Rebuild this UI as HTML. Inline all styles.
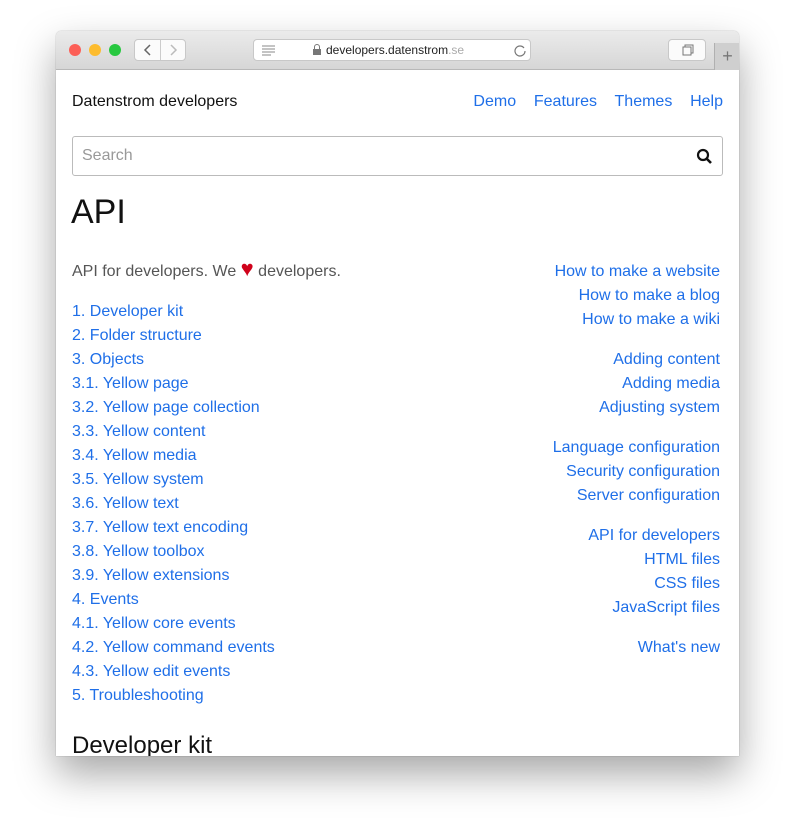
<!DOCTYPE html>
<html><head><meta charset="utf-8"><style>
body{margin:0;width:795px;height:836px;background:#fff;position:relative;overflow:hidden;font-family:"Liberation Sans",sans-serif;}
.win{position:absolute;left:56px;top:31px;width:683px;height:725px;background:#fff;border-radius:5px 5px 0 0;box-shadow:0 18px 40px rgba(0,0,0,.35),0 0 1px rgba(0,0,0,.4);overflow:hidden}
.bar{position:absolute;left:0;top:0;width:683px;height:38px;background:linear-gradient(#ebebeb,#d6d6d6);border-bottom:1px solid #b8b8b8}
.dot{position:absolute;top:13px;width:12px;height:12px;border-radius:50%}
.btn{position:absolute;top:8px;height:22px;background:#fbfbfb;border:1px solid #c8c8c8;border-radius:4px;box-sizing:border-box}
.c{position:absolute;font-size:16px;line-height:24px;color:#0b66e4;white-space:nowrap}
a{color:#1f6fe8;text-decoration:none}
.r{text-align:right;right:19px}
</style></head><body>
<div class="win">
<div class="bar">
<div class="dot" style="left:13px;background:#fc5f57"></div>
<div class="dot" style="left:33px;background:#fdbc2e"></div>
<div class="dot" style="left:53px;background:#28c840"></div>
<div class="btn" style="left:78px;width:52px"><div style="position:absolute;left:25px;top:0;width:1px;height:20px;background:#ccc"></div>
<svg width="50" height="20" style="position:absolute;left:0;top:0"><path d="M15 5l-5 5 5 5" stroke="#666" fill="none" stroke-width="1.5"/><path d="M36 5l5 5-5 5" stroke="#bbb" fill="none" stroke-width="1.5"/></svg></div>
<div class="btn" style="left:197px;width:278px;background:#fff"><svg width="276" height="20" style="position:absolute;left:0;top:0"><path d="M8 6h13M8 9h13M8 12h13M8 15h9" stroke="#888"/><rect x="59" y="9" width="8" height="6" fill="#777"/><path d="M60.5 9v-2a2.5 2.5 0 0 1 5 0v2" stroke="#777" fill="none"/><path d="M270 8a5 5 0 1 0 1 3" stroke="#777" fill="none" stroke-width="1.2"/></svg><span style="position:absolute;left:72px;top:3px;font-size:12px;color:#222">developers.datenstrom<span style="color:#aaa">.se</span></span></div>
<div class="btn" style="left:612px;width:38px"><svg width="36" height="20"><rect x="14" y="7" width="8" height="8" fill="none" stroke="#777"/><path d="M16 7V5h8v8h-2" fill="none" stroke="#777"/></svg></div>
<div style="position:absolute;left:658px;top:12px;width:25px;height:27px;background:#cfcfcf;border-left:1px solid #b0b0b0;color:#777;font-size:18px;text-align:center;line-height:27px">+</div>
</div>
<div style="position:absolute;left:0;top:39px;width:683px;height:686px;">
<div class="c" style="left:16px;top:20px;color:#111">Datenstrom developers</div>
<div class="c" style="right:16px;top:20px"><a>Demo</a>&nbsp;&nbsp;&nbsp; <a>Features</a>&nbsp;&nbsp;&nbsp; <a>Themes</a>&nbsp;&nbsp;&nbsp; <a>Help</a></div>
<div style="position:absolute;left:16px;top:66px;width:651px;height:40px;border:1px solid #bbb;border-radius:3px;box-sizing:border-box"><span style="position:absolute;left:9px;top:10px;font-size:16px;color:#999">Search</span>
<svg width="18" height="18" style="position:absolute;right:8px;top:11px"><circle cx="7" cy="7" r="5" stroke="#111" stroke-width="2.2" fill="none"/><path d="M11 11l4 4" stroke="#111" stroke-width="2.6"/></svg></div>
<div style="position:absolute;left:15px;top:123px;font-size:34px;color:#111">API</div>
<div class="c" style="left:16px;top:190px;color:#555">API for developers. We <span style="color:#d0021b;font-size:22px;line-height:16px">&#x2665;</span> developers.</div>
<div class="c" style="left:16px;top:230px">
<a>1. Developer kit</a><br><a>2. Folder structure</a><br><a>3. Objects</a><br><a>3.1. Yellow page</a><br><a>3.2. Yellow page collection</a><br><a>3.3. Yellow content</a><br><a>3.4. Yellow media</a><br><a>3.5. Yellow system</a><br><a>3.6. Yellow text</a><br><a>3.7. Yellow text encoding</a><br><a>3.8. Yellow toolbox</a><br><a>3.9. Yellow extensions</a><br><a>4. Events</a><br><a>4.1. Yellow core events</a><br><a>4.2. Yellow command events</a><br><a>4.3. Yellow edit events</a><br><a>5. Troubleshooting</a></div>
<div class="c r" style="top:190px">
<a>How to make a website</a><br><a>How to make a blog</a><br><a>How to make a wiki</a><br><div style="height:16px"></div>
<a>Adding content</a><br><a>Adding media</a><br><a>Adjusting system</a><br><div style="height:16px"></div>
<a>Language configuration</a><br><a>Security configuration</a><br><a>Server configuration</a><br><div style="height:16px"></div>
<a>API for developers</a><br><a>HTML files</a><br><a>CSS files</a><br><a>JavaScript files</a><br><div style="height:16px"></div>
<a>What's new</a></div>
<div style="position:absolute;left:16px;top:662px;font-size:24px;color:#111">Developer kit</div>
</div>
</div>
</body></html>
